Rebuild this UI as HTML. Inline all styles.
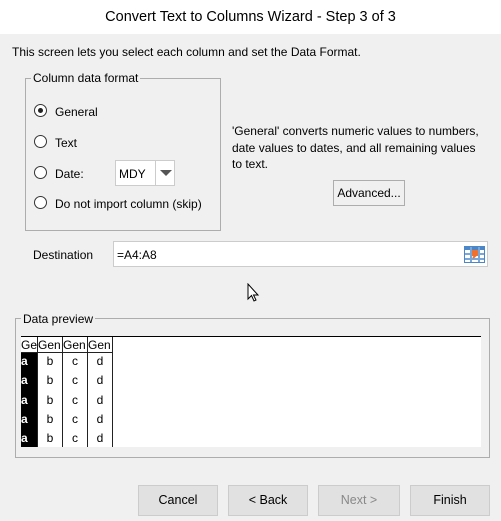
<!DOCTYPE html>
<html><head><style>
*{margin:0;padding:0;box-sizing:border-box}
body{width:501px;height:521px;background:#f0f0f0;font-family:"Liberation Sans","DejaVu Sans",sans-serif;font-size:12px;color:#000;position:relative;overflow:hidden}
.a{position:absolute}
.title{left:0;top:0;width:501px;height:34px;background:#fff;text-align:center;line-height:34px;font-size:14.5px}
.grp{border:1px solid #adadad}
.leg{background:#f0f0f0;padding:0 2px;white-space:nowrap}
.radio{width:13px;height:13px;border:1px solid #333;border-radius:50%;background:#fff}
.dot{position:absolute;left:3px;top:3px;width:5px;height:5px;border-radius:50%;background:#222}
.btn{border:1px solid #ccc;background:#e1e1e1;text-align:center;line-height:28px;font-size:12.5px}
</style></head><body>
<div class="a title">Convert Text to Columns Wizard - Step 3 of 3</div>
<div class="a" style="left:12px;top:45px">This screen lets you select each column and set the Data Format.</div>

<div class="a grp" style="left:25px;top:78px;width:196px;height:153px"></div>
<div class="a leg" style="left:31px;top:71px">Column data format</div>
<div class="a radio" style="left:34px;top:104px"><div class="dot"></div></div>
<div class="a" style="left:55px;top:105px">General</div>
<div class="a radio" style="left:34px;top:135px"></div>
<div class="a" style="left:55px;top:136px">Text</div>
<div class="a radio" style="left:34px;top:166px"></div>
<div class="a" style="left:55px;top:167px">Date:</div>
<div class="a" style="left:115px;top:160px;width:60px;height:26px;background:#fff;border:1px solid #ccc"></div>
<div class="a" style="left:155px;top:161px;width:1px;height:24px;background:#ccc"></div>
<div class="a" style="left:119px;top:167px">MDY</div>
<div class="a" style="left:160px;top:170px;width:0;height:0;border-left:6px solid transparent;border-right:6px solid transparent;border-top:6px solid #555"></div>
<div class="a radio" style="left:34px;top:196px"></div>
<div class="a" style="left:55px;top:197px">Do not import column (skip)</div>

<div class="a" style="left:232px;top:123px;line-height:16.5px;width:250px">'General' converts numeric values to numbers,<br>date values to dates, and all remaining values<br>to text.</div>
<div class="a" style="left:333px;top:180px;width:72px;height:26px;border:1px solid #adadad;background:#f0f0f0;text-align:center;line-height:24px">Advanced...</div>

<div class="a" style="left:33px;top:248px">Destination</div>
<div class="a" style="left:113px;top:241px;width:375px;height:26px;background:#fff;border:1px solid #ccc"></div>
<div class="a" style="left:117px;top:248px">=A4:A8</div>
<svg class="a" style="left:464px;top:246px" width="21" height="17" viewBox="0 0 21 17"><rect x="0.5" y="0.5" width="20" height="16" fill="#fff" stroke="#4a86c8"/><rect x="1" y="1" width="19" height="3" fill="#4a86c8"/><rect x="1" y="7" width="19" height="2" fill="#7aa7da"/><rect x="1" y="12" width="19" height="2" fill="#7aa7da"/><rect x="6" y="1" width="2" height="15" fill="#7aa7da"/><rect x="14" y="1" width="2" height="15" fill="#7aa7da"/><rect x="8" y="4" width="6" height="6" fill="#f07030"/><path d="M9 12 L13 8" stroke="#f07030" stroke-width="2"/></svg>
<svg class="a" style="left:247px;top:283px" width="14" height="20" viewBox="0 0 14 20"><path d="M1 1 L1 16 L4.5 12.5 L7 18 L9 17 L6.5 12 L11 12 Z" fill="#fff" stroke="#000"/></svg>

<div class="a grp" style="left:15px;top:318px;width:475px;height:140px"></div>
<div class="a leg" style="left:21px;top:312px">Data preview</div>
<div class="a" style="left:21px;top:336px;width:460px;height:111px;background:#fff;border-top:1px solid #000"></div>
<div class="a" style="left:21px;top:353px;width:17px;height:94px;background:#000"></div>
<div class="a" style="left:21px;top:337px;width:92px;height:16px;border-bottom:1px solid #222"></div>
<div class="a" style="left:37px;top:337px;width:1px;height:110px;background:#222"></div>
<div class="a" style="left:62px;top:337px;width:1px;height:110px;background:#222"></div>
<div class="a" style="left:87px;top:337px;width:1px;height:110px;background:#222"></div>
<div class="a" style="left:112px;top:337px;width:1px;height:110px;background:#222"></div>
<div class="a" style="left:21px;top:338px;width:17px;overflow:hidden;white-space:nowrap">Gen</div>
<div class="a" style="left:38px;top:338px;width:24px;overflow:hidden">Gen</div>
<div class="a" style="left:63px;top:338px;width:24px;overflow:hidden">Gen</div>
<div class="a" style="left:88px;top:338px;width:24px;overflow:hidden">Gen</div>
<div class="a" style="left:21px;top:352px;line-height:19.3px;color:#fff;font-weight:bold;width:16px;text-align:left">a<br>a<br>a<br>a<br>a</div>
<div class="a" style="left:38px;top:352px;line-height:19.3px;width:24px;text-align:center">b<br>b<br>b<br>b<br>b</div>
<div class="a" style="left:63px;top:352px;line-height:19.3px;width:24px;text-align:center">c<br>c<br>c<br>c<br>c</div>
<div class="a" style="left:88px;top:352px;line-height:19.3px;width:24px;text-align:center">d<br>d<br>d<br>d<br>d</div>

<div class="a btn" style="left:138px;top:485px;width:80px;height:31px">Cancel</div>
<div class="a btn" style="left:228px;top:485px;width:80px;height:31px">&lt; Back</div>
<div class="a btn" style="left:318px;top:485px;width:82px;height:31px;color:#888">Next &gt;</div>
<div class="a btn" style="left:410px;top:485px;width:80px;height:31px">Finish</div>
</body></html>
